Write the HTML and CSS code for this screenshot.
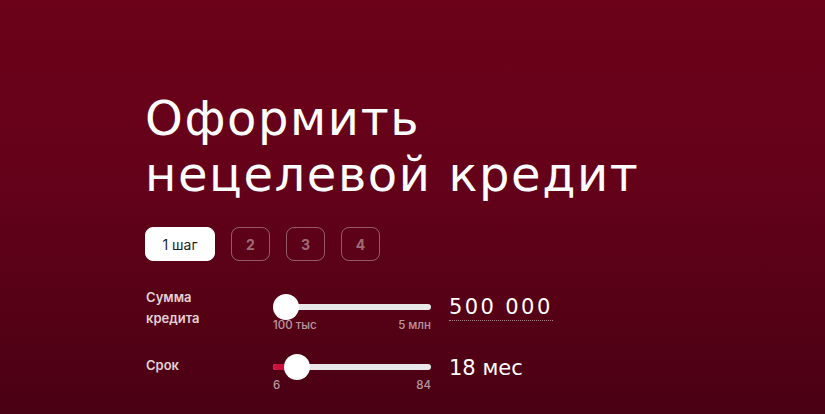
FILE: index.html
```html
<!DOCTYPE html>
<html lang="ru">
<head>
<meta charset="utf-8">
<link rel="stylesheet" href="styles.css">
</head>
<body>
<main class="page">
  <h1 class="title"><span class="title-line">Оформить</span><span class="title-line">нецелевой кредит</span></h1>
  <div class="steps">
    <span class="step step-active">1 шаг</span>
    <span class="step">2</span>
    <span class="step">3</span>
    <span class="step">4</span>
  </div>
  <div class="row row-1">
    <div class="label">Сумма<br>кредита</div>
    <div class="slider">
      <div class="track"><div class="fill" style="width:13px"></div><div class="thumb" style="left:13px"></div></div>
      <div class="ticks"><span>100 тыс</span><span>5 млн</span></div>
    </div>
    <div class="value value-dotted">500 000</div>
  </div>
  <div class="row row-2">
    <div class="label">Срок</div>
    <div class="slider">
      <div class="track"><div class="fill" style="width:24px"></div><div class="thumb" style="left:24px"></div></div>
      <div class="ticks"><span>6</span><span>84</span></div>
    </div>
    <div class="value">18 мес</div>
  </div>
</main>
</body>
</html>
```
FILE: styles.css
```css
html, body {
  margin: 0;
  height: 100%;
}
body {
  background: linear-gradient(180deg, #6b0219 0%, #65021a 40%, #4a0013 100%);
  font-family: "Open Sans", "Noto Sans", sans-serif;
  color: #fff;
  overflow: hidden;
}
.page {
  padding: 90px 0 0 145px;
}
.title {
  margin: 0;
  font-family: "DejaVu Sans", "Open Sans", sans-serif;
  font-weight: 400;
  font-size: 48px;
  line-height: 56px;
  letter-spacing: 1.6px;
}
.title-line {
  display: block;
  height: 56px;
}
.steps {
  display: flex;
  gap: 16px;
  margin-top: 25px;
}
.step {
  box-sizing: border-box;
  height: 34px;
  min-width: 39px;
  border: 1px solid rgba(255,255,255,0.35);
  border-radius: 8px;
  display: flex;
  align-items: center;
  justify-content: center;
  font-family: "Inter", sans-serif;
  font-weight: 700;
  font-size: 14px;
  color: rgba(255,255,255,0.42);
}
.step-active {
  background: #fff;
  border-color: #fff;
  color: #222;
  font-weight: 400;
  padding: 0 14px;
  width: 70px;
}
.row {
  display: flex;
  align-items: flex-start;
}
.row-1 {
  margin-top: 26px;
}
.row-2 {
  margin-top: 23px;
}
.label {
  width: 127px;
  padding-left: 1px;
  font-family: "Inter", sans-serif;
  font-weight: 600;
  font-size: 13px;
  line-height: 21px;
  color: #e2d1d5;
}
.slider {
  width: 158px;
}
.row-1 .slider {
  padding-top: 17px;
}
.row-2 .slider {
  padding-top: 9px;
}
.track {
  position: relative;
  height: 6px;
  border-radius: 3px;
  background: #e8e8e8;
}
.fill {
  position: absolute;
  left: 0;
  top: 0;
  bottom: 0;
  background: #c8103b;
  border-radius: 3px 0 0 3px;
}
.thumb {
  position: absolute;
  top: 50%;
  width: 26px;
  height: 26px;
  margin: -13px 0 0 -13px;
  border-radius: 50%;
  background: #fff;
}
.ticks {
  display: flex;
  justify-content: space-between;
  margin-top: 9px;
  font-family: "Inter", sans-serif;
  font-weight: 500;
  font-size: 11.5px;
  line-height: 13px;
  color: rgba(255,255,255,0.6);
}
.value {
  margin-left: 18px;
  font-family: "DejaVu Sans", "Open Sans", sans-serif;
  font-size: 21px;
  line-height: 26px;
}
.row-1 .value {
  padding-top: 7px;
}
.value-dotted {
  letter-spacing: 2.4px;
  border-bottom: 1px dotted rgba(255,255,255,0.5);
}
```
